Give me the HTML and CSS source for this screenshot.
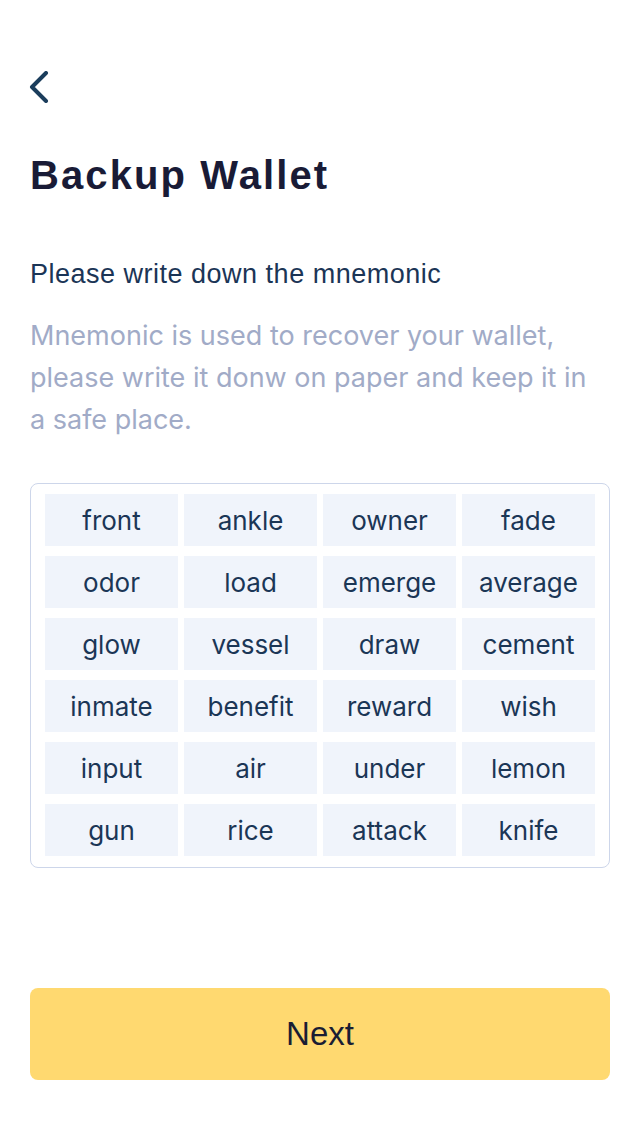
FILE: index.html
```html
<!DOCTYPE html>
<html lang="en">
<head>
<meta charset="utf-8">
<title>Backup Wallet</title>
<link rel="stylesheet" href="styles.css">
</head>
<body>
<main class="page">
  <button class="back" aria-label="Back">
    <svg width="22" height="32" viewBox="0 0 22 32"><path d="M18 2 L4 16 L18 30" fill="none" stroke="#1b3d5c" stroke-width="4" stroke-linecap="round" stroke-linejoin="round"/></svg>
  </button>
  <h1 class="title">Backup Wallet</h1>
  <p class="subtitle">Please write down the mnemonic</p>
  <p class="desc">Mnemonic is used to recover your wallet, please write it donw on paper and keep it in a safe place.</p>
  <div class="words">
    <div class="word">front</div><div class="word">ankle</div><div class="word">owner</div><div class="word">fade</div>
    <div class="word">odor</div><div class="word">load</div><div class="word">emerge</div><div class="word">average</div>
    <div class="word">glow</div><div class="word">vessel</div><div class="word">draw</div><div class="word">cement</div>
    <div class="word">inmate</div><div class="word">benefit</div><div class="word">reward</div><div class="word">wish</div>
    <div class="word">input</div><div class="word">air</div><div class="word">under</div><div class="word">lemon</div>
    <div class="word">gun</div><div class="word">rice</div><div class="word">attack</div><div class="word">knife</div>
  </div>
  <button class="next">Next</button>
</main>
</body>
</html>
```
FILE: styles.css
```css
* { box-sizing: border-box; }
html, body { margin: 0; padding: 0; background: #ffffff; }
body { font-family: "Liberation Sans", Arial, sans-serif; }
.page {
  display: flex;
  flex-direction: column;
  padding: 0 30px;
  width: 640px;
}
.back {
  margin: 71px 0 0 -2px;
  padding: 0;
  border: 0;
  background: none;
  width: 22px;
  height: 32px;
  display: block;
}
.back svg { display: block; }
.title {
  margin: 49px 0 0 0;
  font-size: 40px;
  line-height: 46px;
  font-weight: 700;
  color: #191b36;
  letter-spacing: 2.1px;
}
.subtitle {
  margin: 60px 0 0 0;
  font-size: 27px;
  line-height: 32px;
  color: #1b3556;
  letter-spacing: 0.5px;
}
.desc {
  margin: 25px 0 0 0;
  padding-right: 20px;
  font-family: Inter, "Liberation Sans", sans-serif;
  font-size: 27px;
  line-height: 42px;
  color: #a1abc7;
}
.words {
  margin-top: 42px;
  border: 1px solid #cdd6ea;
  border-radius: 8px;
  padding: 10px 14px 11px 14px;
  display: grid;
  grid-template-columns: repeat(4, 133px);
  grid-auto-rows: 52px;
  column-gap: 6px;
  row-gap: 10px;
}
.word {
  background: #f0f4fb;
  display: flex;
  align-items: center;
  justify-content: center;
  font-family: Inter, "Liberation Sans", sans-serif;
  font-size: 26px;
  color: #1b3656;
}
.next {
  margin-top: 120px;
  height: 92px;
  border: 0;
  border-radius: 8px;
  background: #ffd970;
  font-family: "Liberation Sans", Arial, sans-serif;
  font-size: 33px;
  color: #1a1d33;
  width: 100%;
}
```
